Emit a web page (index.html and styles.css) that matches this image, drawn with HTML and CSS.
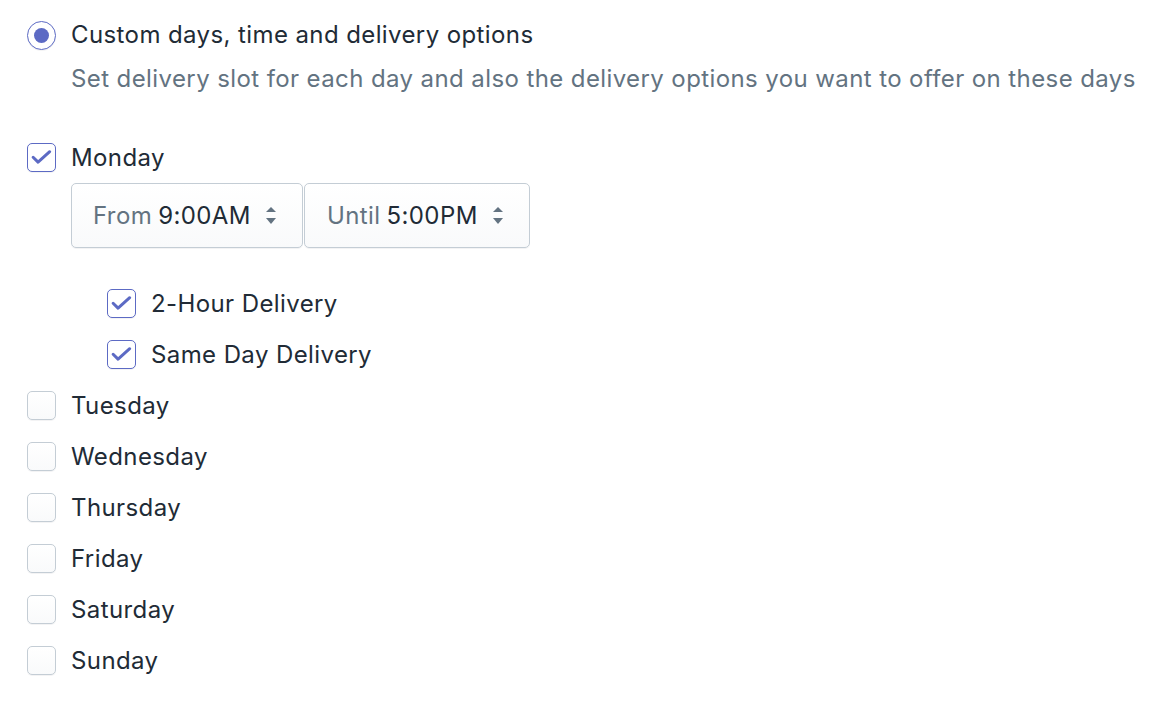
FILE: index.html
```html
<!DOCTYPE html>
<html lang="en">
<head>
    <meta charset="UTF-8">
    <meta name="viewport" content="width=device-width, initial-scale=1.0">
    <title>Delivery schedule</title>
    <link rel="stylesheet" href="styles.css">
</head>
<body>
    <div class="schedule">
        <label class="choice">
            <span class="radio"><span class="radio-dot"></span></span>
            <span class="choice-label">Custom days, time and delivery options</span>
        </label>
        <p class="help-text">Set delivery slot for each day and also the delivery options you want to offer on these days</p>

        <div class="days">
            <div class="day">
                <label class="choice">
                    <span class="checkbox checked">
                        <svg viewBox="0 0 29 29"><path d="M5.5 14.2l5.3 5.3L23.3 8.3"/></svg>
                    </span>
                    <span class="choice-label">Monday</span>
                </label>
                <div class="day-options">
                    <div class="time-selects">
                        <div class="select select-from">
                            <span class="select-label">From</span>
                            <span class="select-value">9:00AM</span>
                            <svg class="select-arrows" viewBox="0 0 10 17"><path d="M5 0l5 5H0z"/><path d="M0 11h10l-5 6z"/></svg>
                        </div>
                        <div class="select select-until">
                            <span class="select-label">Until</span>
                            <span class="select-value">5:00PM</span>
                            <svg class="select-arrows" viewBox="0 0 10 17"><path d="M5 0l5 5H0z"/><path d="M0 11h10l-5 6z"/></svg>
                        </div>
                    </div>
                    <div class="delivery-options">
                        <label class="choice">
                            <span class="checkbox checked">
                                <svg viewBox="0 0 29 29"><path d="M5.5 14.2l5.3 5.3L23.3 8.3"/></svg>
                            </span>
                            <span class="choice-label">2-Hour Delivery</span>
                        </label>
                        <label class="choice">
                            <span class="checkbox checked">
                                <svg viewBox="0 0 29 29"><path d="M5.5 14.2l5.3 5.3L23.3 8.3"/></svg>
                            </span>
                            <span class="choice-label">Same Day Delivery</span>
                        </label>
                    </div>
                </div>
            </div>

            <label class="choice"><span class="checkbox"></span><span class="choice-label">Tuesday</span></label>
            <label class="choice"><span class="checkbox"></span><span class="choice-label">Wednesday</span></label>
            <label class="choice"><span class="checkbox"></span><span class="choice-label">Thursday</span></label>
            <label class="choice"><span class="checkbox"></span><span class="choice-label">Friday</span></label>
            <label class="choice"><span class="checkbox"></span><span class="choice-label">Saturday</span></label>
            <label class="choice"><span class="checkbox"></span><span class="choice-label">Sunday</span></label>
        </div>
    </div>
</body>
</html>
```

FILE: styles.css
```css
body {
    margin: 0;
    background-color: #ffffff;
    color: #212b36;
    font-family: "Inter", "Noto Sans", sans-serif;
    font-size: 24px;
    letter-spacing: 0.4px;
}

.schedule {
    padding: 17px 0 0 27px;
}

.choice {
    display: flex;
    align-items: center;
    gap: 15px;
    height: 51px;
}

.schedule > .choice {
    height: 36px;
}

.choice-label {
    line-height: 36px;
}

.help-text {
    margin: 8px 0 0 44px;
    line-height: 36px;
    color: #637381;
}

.days {
    margin-top: 35px;
}

/* radio + checkbox */
.radio {
    display: flex;
    align-items: center;
    justify-content: center;
    box-sizing: border-box;
    width: 29px;
    height: 29px;
    border: 1px solid #5c6ac4;
    border-radius: 50%;
    background-color: #ffffff;
    box-shadow: 0 1px 0 rgba(22, 29, 37, 0.05);
}

.radio-dot {
    width: 15px;
    height: 15px;
    border-radius: 50%;
    background-color: #5c6ac4;
}

.checkbox {
    flex-shrink: 0;
    box-sizing: border-box;
    width: 29px;
    height: 29px;
    border: 1px solid #c4cdd5;
    border-radius: 5px;
    background: linear-gradient(180deg, #ffffff, #f9fafb);
    box-shadow: 0 1px 0 rgba(22, 29, 37, 0.05);
}

.checkbox.checked {
    border-color: #5c6ac4;
    background: #ffffff;
}

.checkbox svg {
    display: block;
    width: 27px;
    height: 27px;
}

.checkbox path {
    fill: none;
    stroke: #5c6ac4;
    stroke-width: 3.2;
    stroke-linecap: round;
    stroke-linejoin: round;
}

/* monday options */
.day-options {
    padding-left: 44px;
}

.time-selects {
    display: flex;
    gap: 1px;
}

.select {
    display: flex;
    align-items: center;
    box-sizing: border-box;
    height: 65px;
    padding: 0 26px 0 21px;
    border: 1px solid #c4cdd5;
    border-radius: 5px;
    background: linear-gradient(180deg, #ffffff, #f9fafb);
    box-shadow: 0 1px 0 rgba(22, 29, 37, 0.05);
}

.select-from {
    width: 232px;
}

.select-until {
    width: 226px;
    padding-left: 22px;
}

.select-label {
    color: #637381;
    margin-right: 6px;
}

.select-value {
    color: #212b36;
}

.select-arrows {
    width: 10px;
    height: 17px;
    margin-left: auto;
    fill: #637381;
}

.delivery-options {
    margin-top: 30px;
    padding-left: 36px;
}
```
